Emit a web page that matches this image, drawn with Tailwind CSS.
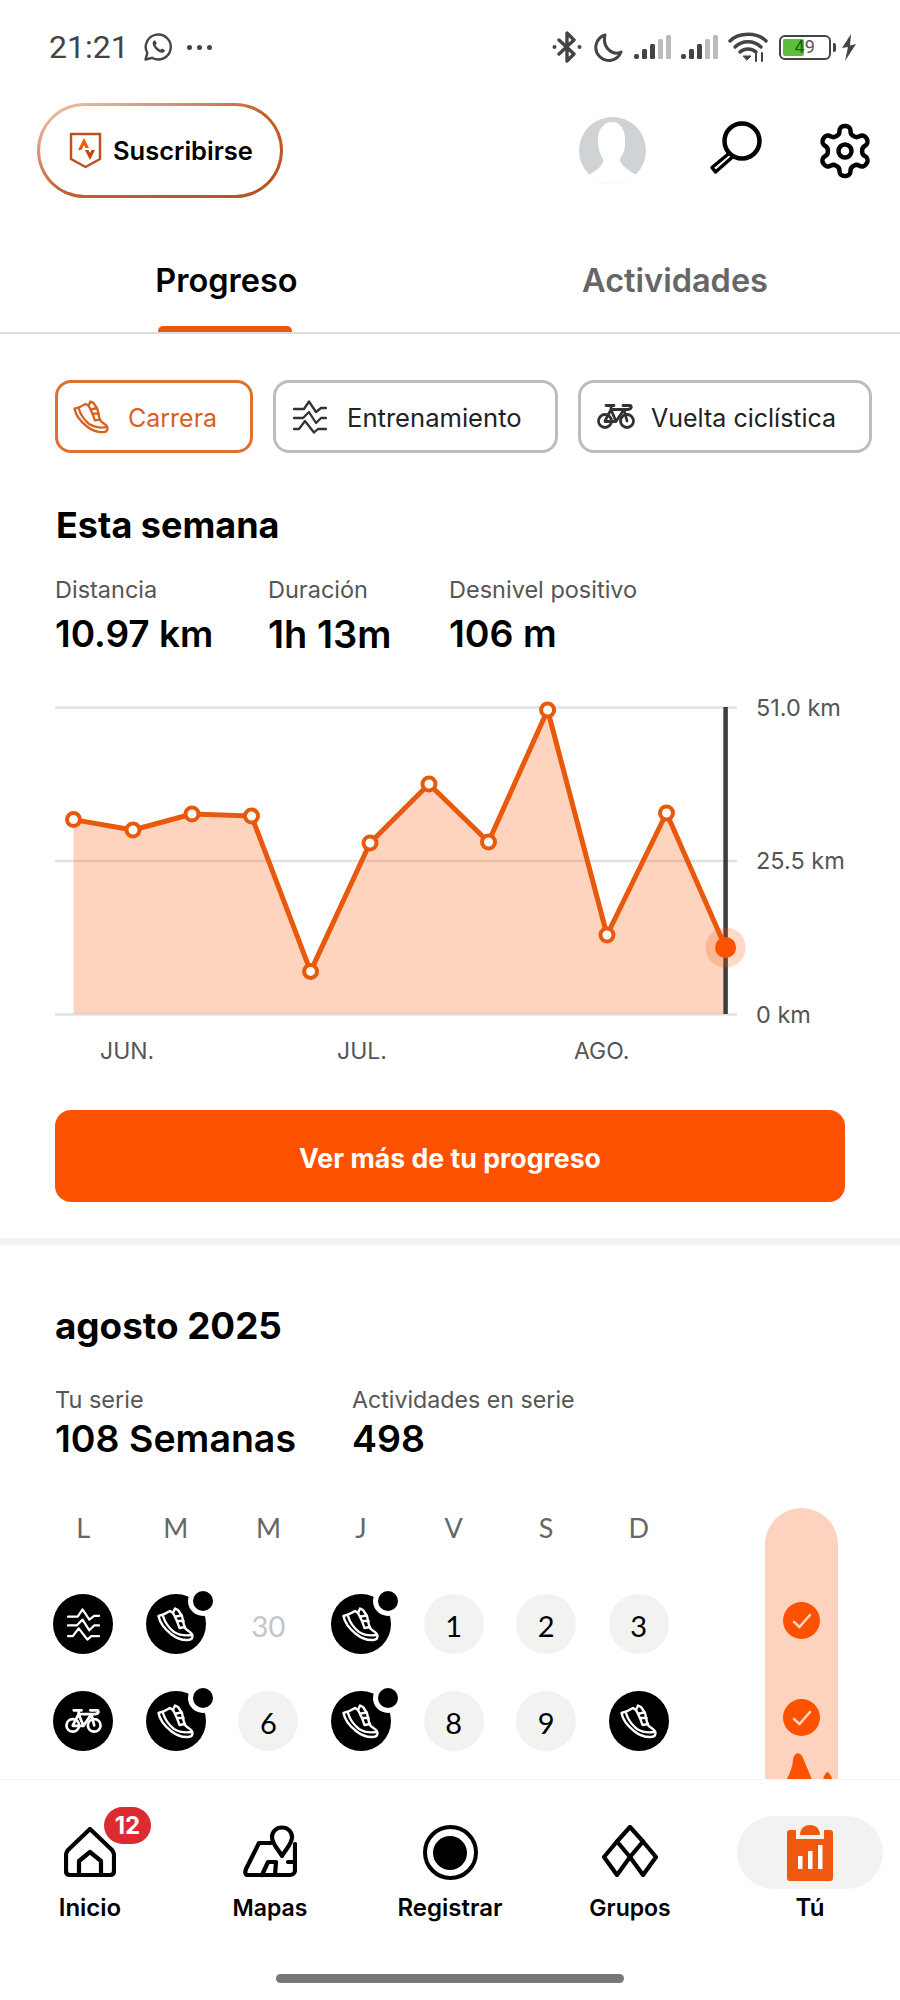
<!DOCTYPE html>
<html lang="es">
<head>
    <meta charset="UTF-8">
    <meta name="viewport" content="width=device-width, initial-scale=1.0">
    <title>Progreso</title>
    <script src="https://cdn.jsdelivr.net/npm/@tailwindcss/browser@4"></script>
</head>
<body class="bg-white text-black font-['Inter','Liberation_Sans',sans-serif]">

<!-- Shared icons -->
<svg class="hidden">
    <symbol id="shoe" viewBox="0 0 37 35">
        <g fill="none" stroke="currentColor" stroke-width="2.400" stroke-linejoin="round" stroke-linecap="round">
            <path d="M1.500 9C5 8 10 6 13 4L16 6L18 1.500L21 3L25 9C26 13 26 16 28 21C30 24 35.500 25 35.500 29C35.500 32 34 33 31 33C24 33.500 19 31 14 27C9 23 3 17 1.500 9Z"/>
            <path d="M6 9C8 16 12 21 17 25C22 28 28 29 34.500 28"/>
            <path d="M16 6C18 10 20 13 22.500 21L28 20M21 14H26.500M19 9.500L24.500 8.500"/>
        </g>
    </symbol>
    <symbol id="waves" viewBox="0 0 34 34">
        <g fill="none" stroke="currentColor" stroke-width="2.300" stroke-linecap="round" stroke-linejoin="round">
            <path d="M1 9H11L16 1.500L23 12L28 8H33"/>
            <path d="M1 18H10L16 12L23 23L28 18H33"/>
            <path d="M1 29H6L12 21L21 32.500L25 29H33"/>
        </g>
    </symbol>
    <symbol id="bike" viewBox="0 0 38 26">
        <g fill="none" stroke="currentColor" stroke-width="2.800" stroke-linecap="round" stroke-linejoin="round">
            <circle cx="8" cy="17.500" r="6.500"/>
            <circle cx="30" cy="17.500" r="6.500"/>
            <path d="M8 17.500L14 6H27L19 18H8M14 6L19 18M27 6L30 17.500M9 2H17M14 2L14 6M26 2H33C35 2 35 6 31 6H27"/>
        </g>
    </symbol>
</svg>

<div class="w-[900px] h-[2000px] flex flex-col overflow-hidden">

    <div class="h-[1779px] overflow-hidden shrink-0">

        <!-- Status bar -->
        <div class="h-[94px] flex items-center pl-[49px] text-[#444]">
            <span class="text-[32px] leading-none font-['Roboto',sans-serif]">21:21</span>
            <svg class="ml-[15px] w-[28px] h-[28px]" viewBox="0 0 28 28" fill="none" stroke="#444" stroke-width="2.400" stroke-linejoin="round">
                <path d="M1.500 26.500L3.300 20A12.500 12.500 0 1 1 8 24.800Z"/>
                <path d="M9.500 8C8 9.500 8.500 12 10.500 15C13 18 16 20 18.500 19.800C20 19.500 21 18.500 21 17.300L18 15.500L16.500 16.800C14.500 16 12.500 14 11.500 12L12.800 10.500L11.300 7.500C10.500 7.500 10 7.500 9.500 8Z" fill="#444" stroke="none"/>
            </svg>
            <div class="ml-[15px] flex gap-[5px]">
                <span class="w-[5px] h-[5px] rounded-full bg-[#444]"></span>
                <span class="w-[5px] h-[5px] rounded-full bg-[#444]"></span>
                <span class="w-[5px] h-[5px] rounded-full bg-[#444]"></span>
            </div>

            <svg class="ml-[340px] w-[30px] h-[32px]" viewBox="0 0 30 32" fill="none" stroke="#444" stroke-width="3.400" stroke-linejoin="round" stroke-linecap="round">
                <path d="M7 9L22 23L15 30V2L22 9L7 23"/>
                <circle cx="2.500" cy="16" r="2" fill="#444" stroke="none"/>
                <circle cx="27.500" cy="16" r="2" fill="#444" stroke="none"/>
            </svg>
            <svg class="ml-[12px] w-[29px] h-[29px]" viewBox="0 0 29 29" fill="none" stroke="#444" stroke-width="3" stroke-linejoin="round">
                <path d="M11 2A13 13 0 1 0 27 19C19 23 8 15 11 2Z"/>
            </svg>
            <svg class="ml-[11px] w-[37px] h-[24px]" viewBox="0 0 37 24">
                <rect x="0" y="19" width="5" height="5" rx="2" fill="#444"/>
                <rect x="8" y="14" width="5" height="10" rx="1.500" fill="#444"/>
                <rect x="16" y="9" width="5" height="15" rx="1.500" fill="#444"/>
                <rect x="24" y="4" width="5" height="20" rx="1.500" fill="#bbb"/>
                <rect x="32" y="0" width="5" height="24" rx="1.500" fill="#bbb"/>
            </svg>
            <svg class="ml-[10px] w-[37px] h-[24px]" viewBox="0 0 37 24">
                <rect x="0" y="19" width="5" height="5" rx="2" fill="#444"/>
                <rect x="8" y="14" width="5" height="10" rx="1.500" fill="#444"/>
                <rect x="16" y="9" width="5" height="15" rx="1.500" fill="#444"/>
                <rect x="24" y="4" width="5" height="20" rx="1.500" fill="#bbb"/>
                <rect x="32" y="0" width="5" height="24" rx="1.500" fill="#bbb"/>
            </svg>
            <svg class="ml-[10px] w-[40px] h-[30px]" viewBox="0 0 40 30" fill="none" stroke="#444" stroke-width="3.400" stroke-linecap="round">
                <path d="M2 9C11 0 29 0 38 9"/>
                <path d="M7 15C14 8 26 8 33 15"/>
                <path d="M12 20C16 16 24 16 28 20"/>
                <path d="M15.500 24H23L19 28Z" fill="#444" stroke-width="1"/>
                <path d="M28 21V29M34 21V29" stroke-width="2"/>
            </svg>
            <div class="ml-[11px] relative w-[52px] h-[25px] border-[2.500px] border-[#444] rounded-[6px] p-[2px]">
                <div class="w-[21px] h-full bg-[#5cbf3a] rounded-[2px]"></div>
                <span class="absolute inset-0 flex items-center justify-center text-[18px] leading-none font-['Roboto',sans-serif] text-[#555]"><span class="text-[#1d5c10]">4</span>9</span>
            </div>
            <div class="ml-[2px] w-[3px] h-[9px] bg-[#444] rounded-r-[2px]"></div>
            <svg class="ml-[5px] w-[16px] h-[27px]" viewBox="0 0 16 27" fill="#444">
                <path d="M10 0L1 14L7 13L4 27L15 10L9 11.500Z"/>
            </svg>
        </div>

        <!-- Header -->
        <div class="pt-[9px] h-[104px] pl-[37px] flex items-start">
            <div class="w-[246px] h-[95px] rounded-full p-[3px] bg-linear-to-br from-[#eccbb6] via-[#c4622c] to-[#b5501c]">
                <div class="w-full h-full bg-white rounded-full flex items-center pl-[29px]">
                    <svg class="w-[33px] h-[37px]" viewBox="0 0 33 37" fill="none">
                        <path d="M2 2H31V27L16.500 35L2 27Z" stroke="#bf4f1e" stroke-width="2.500" stroke-linejoin="round"/>
                        <path d="M9 18L15 6L20 16H16.500L15 13L12.500 18Z" fill="#e8590c"/>
                        <path d="M16 18H19.500L21 21L22.500 18H26L21 28Z" fill="#b8481a"/>
                    </svg>
                    <span class="ml-[11px] text-[25.500px] font-semibold leading-none">Suscribirse</span>
                </div>
            </div>
            <div class="ml-[296px] mt-[14px] w-[67px] h-[67px] rounded-full bg-[#d0d3d6] overflow-hidden">
                <svg class="w-[67px] h-[67px]" viewBox="0 0 67 67" fill="#fff">
                    <path d="M33 5C25 5 19 12 19 23C19 30 20 35 24 42C25 47 20 52 11 57L0 58V67H67V58L56 57C47 52 41 47 41 42C46 35 46 30 46 23C46 12 41 5 33 5Z"/>
                </svg>
            </div>
            <svg class="ml-[61px] mt-[17px] w-[56px] h-[56px]" viewBox="0 0 56 56" fill="none" stroke="#000">
                <circle cx="35" cy="21" r="17.500" stroke-width="4.500"/>
                <path d="M22.500 33L5 47.500L8.500 52L25.500 37" stroke-width="3.500" stroke-linejoin="round"/>
            </svg>
            <svg class="ml-[52px] mt-[18px] w-[60px] h-[60px]" viewBox="0 0 24 24" fill="none" stroke="#000" stroke-width="1.800" stroke-linecap="round" stroke-linejoin="round">
                <path d="M12.220 2h-.44a2 2 0 0 0-2 2v.18a2 2 0 0 1-1 1.730l-.43.25a2 2 0 0 1-2 0l-.15-.08a2 2 0 0 0-2.730.73l-.22.38a2 2 0 0 0 .73 2.730l.15.1a2 2 0 0 1 1 1.720v.51a2 2 0 0 1-1 1.740l-.15.09a2 2 0 0 0-.73 2.730l.22.38a2 2 0 0 0 2.730.73l.15-.08a2 2 0 0 1 2 0l.43.25a2 2 0 0 1 1 1.730V20a2 2 0 0 0 2 2h.44a2 2 0 0 0 2-2v-.18a2 2 0 0 1 1-1.730l.43-.25a2 2 0 0 1 2 0l.15.08a2 2 0 0 0 2.730-.73l.22-.39a2 2 0 0 0-.73-2.730l-.15-.08a2 2 0 0 1-1-1.740v-.5a2 2 0 0 1 1-1.740l.15-.09a2 2 0 0 0 .73-2.730l-.22-.38a2 2 0 0 0-2.730-.73l-.15.08a2 2 0 0 1-2 0l-.43-.25a2 2 0 0 1-1-1.730V4a2 2 0 0 0-2-2z"/>
                <circle cx="12" cy="12" r="2.600"/>
            </svg>
        </div>

        <!-- Tabs -->
        <div class="grid grid-cols-2 h-[136px] border-b-[2px] border-[#dedede]">
            <div class="relative flex justify-center pt-[62px] pl-[3px]">
                <span class="text-[32.500px] leading-[42px] font-semibold">Progreso</span>
                <div class="absolute left-[158px] bottom-0 w-[134px] h-[6px] bg-[#e8590c] rounded-t-[5px]"></div>
            </div>
            <div class="flex justify-center pt-[62px]">
                <span class="text-[32.500px] leading-[42px] font-semibold text-[#666]">Actividades</span>
            </div>
        </div>

        <!-- Sport chips -->
        <div class="mt-[46px] pl-[55px] flex gap-[20px]">
            <div class="w-[198px] h-[73px] rounded-[16px] border-[3px] border-[#e0702f] flex items-center pl-[15px] text-[#d9611f]">
                <svg class="w-[36px] h-[34px] text-[#d9611f]"><use href="#shoe"/></svg>
                <span class="ml-[19px] pt-[3px] text-[25px] leading-none">Carrera</span>
            </div>
            <div class="w-[285px] h-[73px] rounded-[16px] border-[3px] border-[#bdbdbd] flex items-center pl-[17px]">
                <svg class="w-[34px] h-[34px] text-[#333]"><use href="#waves"/></svg>
                <span class="ml-[20px] pt-[3px] text-[25.600px] leading-none text-[#222]">Entrenamiento</span>
            </div>
            <div class="w-[294px] h-[73px] rounded-[16px] border-[3px] border-[#bdbdbd] flex items-center pl-[16px]">
                <svg class="w-[38px] h-[27px] text-[#333]"><use href="#bike"/></svg>
                <span class="ml-[16px] pt-[3px] text-[25px] leading-none text-[#222]">Vuelta ciclística</span>
            </div>
        </div>

        <!-- This week -->
        <h2 class="mt-[50px] ml-[56px] text-[36px] leading-[44px] font-bold">Esta semana</h2>
        <div class="mt-[28px] ml-[55px] flex">
            <div class="w-[213px]">
                <div class="text-[23.500px] leading-[30px] text-[#555]">Distancia</div>
                <div class="mt-[7px] text-[37px] leading-[44px] font-semibold">10.97 km</div>
            </div>
            <div class="w-[181px]">
                <div class="text-[23.500px] leading-[30px] text-[#555]">Duración</div>
                <div class="mt-[7px] text-[38px] leading-[44px] font-semibold">1h 13m</div>
            </div>
            <div>
                <div class="text-[23.500px] leading-[30px] text-[#555]">Desnivel positivo</div>
                <div class="mt-[7px] text-[37.500px] leading-[44px] font-semibold">106 m</div>
            </div>
        </div>

        <!-- Chart -->
        <div class="relative mt-[44px] h-[320px]">
            <svg class="block w-[900px] h-[320px]" viewBox="0 700 900 320">
                <path d="M55 707.500H737M55 861H737M55 1014.500H737" stroke="#e2e2e2" stroke-width="2.500" fill="none"/>
                <path d="M73.500 819.600L133 830L192 814L251.500 816L310.600 971.400L370 843L429 784L488.500 842L547.600 710L607 935L666.500 813L725.600 947.500V1014H73.500Z" fill="#fc5200" fill-opacity="0.25"/>
                <path d="M725.600 707V1014" stroke="#3d3d3d" stroke-width="4.500"/>
                <path d="M73.500 819.600L133 830L192 814L251.500 816L310.600 971.400L370 843L429 784L488.500 842L547.600 710L607 935L666.500 813L725.600 947.500" stroke="#e8590c" stroke-width="5" stroke-linejoin="round" fill="none"/>
                <g fill="#fff" stroke="#e8590c" stroke-width="4">
                    <circle cx="73.500" cy="819.600" r="6.500"/>
                    <circle cx="133" cy="830" r="6.500"/>
                    <circle cx="192" cy="814" r="6.500"/>
                    <circle cx="251.500" cy="816" r="6.500"/>
                    <circle cx="310.600" cy="971.400" r="6.500"/>
                    <circle cx="370" cy="843" r="6.500"/>
                    <circle cx="429" cy="784" r="6.500"/>
                    <circle cx="488.500" cy="842" r="6.500"/>
                    <circle cx="547.600" cy="710" r="6.500"/>
                    <circle cx="607" cy="935" r="6.500"/>
                    <circle cx="666.500" cy="813" r="6.500"/>
                </g>
                <circle cx="725.600" cy="947.500" r="20" fill="#fc5200" fill-opacity="0.22"/>
                <circle cx="725.600" cy="947.500" r="10.500" fill="#fc5200"/>
            </svg>
            <span class="absolute left-[756px] top-[-7px] text-[23.500px] leading-[30px] text-[#555]">51.0 km</span>
            <span class="absolute left-[756px] top-[146px] text-[23.500px] leading-[30px] text-[#555]">25.5 km</span>
            <span class="absolute left-[756px] top-[300px] text-[23.500px] leading-[30px] text-[#555]">0 km</span>
        </div>
        <div class="mt-[16px] pl-[100px] flex text-[23px] leading-[30px] text-[#555]">
            <span class="w-[237px]">JUN.</span>
            <span class="w-[237px]">JUL.</span>
            <span>AGO.</span>
        </div>

        <!-- Progress button -->
        <div class="mt-[44px] mx-[55px] h-[92px] pt-[4px] rounded-[16px] bg-[#fc5200] flex items-center justify-center text-white text-[26.700px] font-bold">
            Ver más de tu progreso
        </div>

        <div class="mt-[36px] h-[7px] bg-[#f3f3f3]"></div>

        <!-- Streak calendar -->
        <h2 class="mt-[59px] ml-[55px] text-[36.800px] leading-[44px] font-bold">agosto 2025</h2>
        <div class="mt-[37px] ml-[55px] flex">
            <div class="w-[297px]">
                <div class="text-[23.500px] leading-[30px] text-[#555]">Tu serie</div>
                <div class="mt-[2px] text-[37.500px] leading-[44px] font-semibold whitespace-nowrap">108 Semanas</div>
            </div>
            <div>
                <div class="text-[23.200px] leading-[30px] text-[#555]">Actividades en serie</div>
                <div class="mt-[2px] text-[37.500px] leading-[44px] font-semibold">498</div>
            </div>
        </div>

        <div class="flex items-start">
            <div class="ml-[37px] w-[648px] shrink-0 grid grid-cols-7 mt-[52px] font-['Lato',sans-serif]">
                <div class="h-[30px] flex items-center justify-center text-[27px] text-[#666]">L</div>
                <div class="h-[30px] flex items-center justify-center text-[27px] text-[#666]">M</div>
                <div class="h-[30px] flex items-center justify-center text-[27px] text-[#666]">M</div>
                <div class="h-[30px] flex items-center justify-center text-[27px] text-[#666]">J</div>
                <div class="h-[30px] flex items-center justify-center text-[27px] text-[#666]">V</div>
                <div class="h-[30px] flex items-center justify-center text-[27px] text-[#666]">S</div>
                <div class="h-[30px] flex items-center justify-center text-[27px] text-[#666]">D</div>

                <!-- Week 1 -->
                <div class="mt-[51px] flex justify-center">
                    <div class="w-[60px] h-[60px] rounded-full bg-black text-white flex items-center justify-center"><svg class="w-[33px] h-[33px]"><use href="#waves"/></svg></div>
                </div>
                <div class="mt-[51px] flex justify-center">
                    <div class="relative w-[60px] h-[60px] rounded-full bg-black text-white flex items-center justify-center">
                        <svg class="w-[37px] h-[35px]"><use href="#shoe"/></svg>
                        <span class="absolute left-[42px] top-[-8px] w-[30px] h-[30px] rounded-full bg-black border-[5px] border-white"></span>
                    </div>
                </div>
                <div class="mt-[51px] flex justify-center">
                    <div class="w-[60px] h-[60px] pt-[3px] flex items-center justify-center text-[29px] text-[#c4c4c4]">30</div>
                </div>
                <div class="mt-[51px] flex justify-center">
                    <div class="relative w-[60px] h-[60px] rounded-full bg-black text-white flex items-center justify-center">
                        <svg class="w-[37px] h-[35px]"><use href="#shoe"/></svg>
                        <span class="absolute left-[42px] top-[-8px] w-[30px] h-[30px] rounded-full bg-black border-[5px] border-white"></span>
                    </div>
                </div>
                <div class="mt-[51px] flex justify-center">
                    <div class="w-[60px] h-[60px] pt-[3px] rounded-full bg-[#f2f2f0] flex items-center justify-center text-[29px]">1</div>
                </div>
                <div class="mt-[51px] flex justify-center">
                    <div class="w-[60px] h-[60px] pt-[3px] rounded-full bg-[#f2f2f0] flex items-center justify-center text-[29px]">2</div>
                </div>
                <div class="mt-[51px] flex justify-center">
                    <div class="w-[60px] h-[60px] pt-[3px] rounded-full bg-[#f2f2f0] flex items-center justify-center text-[29px]">3</div>
                </div>

                <!-- Week 2 -->
                <div class="mt-[37px] flex justify-center">
                    <div class="w-[60px] h-[60px] rounded-full bg-black text-white flex items-center justify-center"><svg class="w-[37px] h-[26px]"><use href="#bike"/></svg></div>
                </div>
                <div class="mt-[37px] flex justify-center">
                    <div class="relative w-[60px] h-[60px] rounded-full bg-black text-white flex items-center justify-center">
                        <svg class="w-[37px] h-[35px]"><use href="#shoe"/></svg>
                        <span class="absolute left-[42px] top-[-8px] w-[30px] h-[30px] rounded-full bg-black border-[5px] border-white"></span>
                    </div>
                </div>
                <div class="mt-[37px] flex justify-center">
                    <div class="w-[60px] h-[60px] pt-[3px] rounded-full bg-[#f2f2f0] flex items-center justify-center text-[29px]">6</div>
                </div>
                <div class="mt-[37px] flex justify-center">
                    <div class="relative w-[60px] h-[60px] rounded-full bg-black text-white flex items-center justify-center">
                        <svg class="w-[37px] h-[35px]"><use href="#shoe"/></svg>
                        <span class="absolute left-[42px] top-[-8px] w-[30px] h-[30px] rounded-full bg-black border-[5px] border-white"></span>
                    </div>
                </div>
                <div class="mt-[37px] flex justify-center">
                    <div class="w-[60px] h-[60px] pt-[3px] rounded-full bg-[#f2f2f0] flex items-center justify-center text-[29px]">8</div>
                </div>
                <div class="mt-[37px] flex justify-center">
                    <div class="w-[60px] h-[60px] pt-[3px] rounded-full bg-[#f2f2f0] flex items-center justify-center text-[29px]">9</div>
                </div>
                <div class="mt-[37px] flex justify-center">
                    <div class="w-[60px] h-[60px] rounded-full bg-black text-white flex items-center justify-center"><svg class="w-[37px] h-[35px]"><use href="#shoe"/></svg></div>
                </div>
            </div>

            <!-- Week streak column -->
            <div class="ml-[80px] mt-[47px] w-[73px] h-[400px] shrink-0 rounded-t-full bg-[#fdd3bf] flex flex-col items-center pt-[94px]">
                <div class="w-[37px] h-[37px] rounded-full bg-[#fc5200] flex items-center justify-center">
                    <svg class="w-[20px] h-[18px]" viewBox="0 0 20 18" fill="none" stroke="#fdd3bf" stroke-width="2.600" stroke-linecap="round" stroke-linejoin="round"><path d="M2 10L7.500 15L18 3"/></svg>
                </div>
                <div class="mt-[60px] w-[37px] h-[37px] rounded-full bg-[#fc5200] flex items-center justify-center">
                    <svg class="w-[20px] h-[18px]" viewBox="0 0 20 18" fill="none" stroke="#fdd3bf" stroke-width="2.600" stroke-linecap="round" stroke-linejoin="round"><path d="M2 10L7.500 15L18 3"/></svg>
                </div>
                <svg class="mt-[16px] ml-[12px] w-[56px] h-[40px] shrink-0" viewBox="0 0 56 40" fill="#fc5200">
                    <path d="M0 40C6 28 12 20 13 8C14 0 20 -1 23 6C27 16 32 26 36 40Z"/>
                    <path d="M40 40C42 30 44 22 47 20C50 20 53 28 56 40Z"/>
                </svg>
            </div>
        </div>
    </div>

    <!-- Bottom nav -->
    <nav class="relative flex-1 bg-white border-t border-[#f4f4f4]">
        <div class="grid grid-cols-5 pt-[36px]">
            <div class="flex flex-col items-center">
                <div class="relative w-[146px] h-[73px] flex items-start justify-center pt-[11px]">
                    <svg class="w-[52px] h-[50px]" viewBox="0 0 52 50" fill="none" stroke="#000" stroke-width="4.200" stroke-linejoin="round" stroke-linecap="round">
                        <path d="M26 2L4 23C2.500 25 2 26 2 28V44C2 46.500 3.500 48 6 48H46C48.500 48 50 46.500 50 44V28C50 26 49.500 25 48 23Z"/>
                        <path d="M15 48V34L26 25L37 34V48"/>
                    </svg>
                    <span class="absolute left-[87px] top-[-9px] w-[47px] h-[37px] rounded-full bg-[#dc2b33] flex items-center justify-center text-white text-[24px] font-bold leading-none">12</span>
                </div>
                <span class="mt-[4px] text-[24px] leading-[30px] font-semibold">Inicio</span>
            </div>
            <div class="flex flex-col items-center">
                <div class="w-[146px] h-[73px] flex items-start justify-center pt-[9px]">
                    <svg class="w-[54px] h-[53px]" viewBox="0 0 54 53" fill="none" stroke="#000" stroke-width="4.200" stroke-linejoin="round" stroke-linecap="round">
                        <path d="M39 2.500C33 2.500 29 7 29 12C29 19 35 24 39 31C43 24 49 19 49 12C49 7 45 2.500 39 2.500Z"/>
                        <path d="M28 18H16L3 44C1.500 48 2.500 50 5 50H47C50 50 52 48 52 45V19"/>
                        <path d="M19 50L25 37H33M45 37H52M33 37L32 50"/>
                    </svg>
                </div>
                <span class="mt-[4px] text-[23px] leading-[30px] font-semibold">Mapas</span>
            </div>
            <div class="flex flex-col items-center">
                <div class="w-[146px] h-[73px] flex items-start justify-center pt-[9px]">
                    <div class="w-[55px] h-[55px] rounded-full border-[4.500px] border-black flex items-center justify-center">
                        <div class="w-[34px] h-[34px] rounded-full bg-black"></div>
                    </div>
                </div>
                <span class="mt-[4px] text-[24px] leading-[30px] font-semibold">Registrar</span>
            </div>
            <div class="flex flex-col items-center">
                <div class="w-[146px] h-[73px] flex items-start justify-center pt-[9px]">
                    <svg class="w-[56px] h-[52px]" viewBox="0 0 56 52" fill="none" stroke="#000" stroke-width="4.200" stroke-linejoin="round" stroke-linecap="round">
                        <path d="M28 2L41 16.500L28 32L15 16.500Z"/>
                        <path d="M15 16.500L2 32L15 50L28 32L41 50L54 32L41 16.500"/>
                    </svg>
                </div>
                <span class="mt-[4px] text-[23px] leading-[30px] font-semibold">Grupos</span>
            </div>
            <div class="flex flex-col items-center">
                <div class="w-[146px] h-[73px] rounded-full bg-[#f2f2f0] flex items-start justify-center pt-[9px]">
                    <svg class="w-[46px] h-[56px]" viewBox="0 0 46 56">
                        <path d="M3 5H9V14H37V5H43C45 5 46 6 46 8V53C46 55 45 56 43 56H3C1 56 0 55 0 53V8C0 6 1 5 3 5Z" fill="#f0580f"/>
                        <path d="M13 10C13 4 17 0 23 0C29 0 33 4 33 10Z" fill="#f0580f"/>
                        <rect x="11" y="31" width="4.500" height="13" fill="#fff"/>
                        <rect x="21" y="26" width="4.500" height="18" fill="#fff"/>
                        <rect x="31" y="20" width="4.500" height="24" fill="#fff"/>
                    </svg>
                </div>
                <span class="mt-[4px] text-[24px] leading-[30px] font-semibold">Tú</span>
            </div>
        </div>
        <div class="mt-[51px] mx-auto w-[348px] h-[9px] rounded-full bg-[#777]"></div>
    </nav>
</div>

</body>
</html>
